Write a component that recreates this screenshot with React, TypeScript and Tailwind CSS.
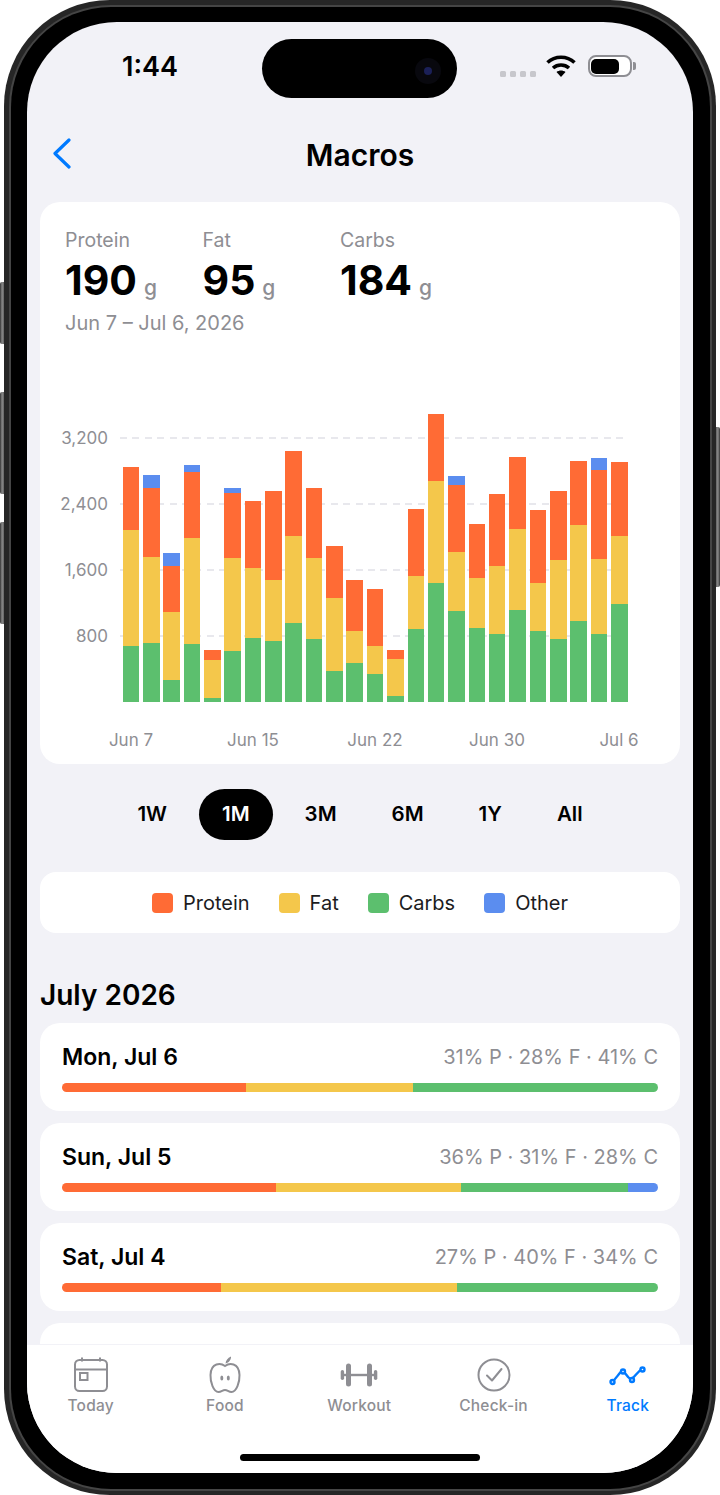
const ORANGE = '#ff6b35'
const YELLOW = '#f4c74b'
const GREEN = '#5cbf6e'
const BLUE = '#5b8def'

// tops of each segment as read from the chart, [green, fat, protein, other], baseline at 905
const bars: number[][] = [
  [736, 390, 201],
  [729, 470, 264, 223],
  [840, 635, 496, 457],
  [730, 413, 214, 193],
  [894, 778, 748],
  [752, 474, 279, 262],
  [714, 504, 302],
  [723, 538, 272],
  [668, 406, 153],
  [717, 472, 262],
  [813, 594, 438],
  [787, 693, 538],
  [820, 736, 566],
  [887, 777, 750],
  [686, 526, 327],
  [547, 241, 41],
  [632, 454, 255, 228],
  [682, 534, 370],
  [700, 496, 281],
  [628, 386, 171],
  [693, 549, 328],
  [717, 478, 271],
  [661, 373, 181],
  [702, 476, 208, 172],
  [612, 407, 184],
]

const segColors = [GREEN, YELLOW, ORANGE, BLUE]

const days = [
  { label: 'Mon, Jul 6', text: '31% P · 28% F · 41% C', parts: [184, 167, 245, 0] },
  { label: 'Sun, Jul 5', text: '36% P · 31% F · 28% C', parts: [214, 185, 167, 30] },
  { label: 'Sat, Jul 4', text: '27% P · 40% F · 34% C', parts: [159, 236, 201, 0] },
]

function Bar({ tops }: { tops: number[] }) {
  return (
    <div className="flex w-[16.6px] flex-col-reverse">
      {tops.map((top, i) => {
        const prev = i === 0 ? 905 : tops[i - 1]
        return <div key={i} style={{ height: (prev - top) / 3, backgroundColor: segColors[i] }} />
      })}
    </div>
  )
}

function Stat({ label, value }: { label: string; value: string }) {
  return (
    <div className="w-[137.5px]">
      <div className="text-[19.5px] leading-[26px] text-[#8e8e93]">{label}</div>
      <div className="mt-[9px] flex items-baseline gap-[7px] leading-[36px]">
        <span className="text-[41px] font-bold text-black">{value}</span>
        <span className="text-[21px] font-medium text-[#8e8e93]">g</span>
      </div>
    </div>
  )
}

function Chart() {
  return (
    <div className="mt-[36px] flex">
      <div className="flex w-[68px] flex-col items-end pt-[55px] text-[17px] leading-[22px] text-[#8e8e93]">
        <div className="h-[66px]">3,200</div>
        <div className="h-[66px]">2,400</div>
        <div className="h-[66px]">1,600</div>
        <div className="h-[66px]">800</div>
      </div>
      <div className="relative ml-[12px] h-[330px] w-[508px]">
        <div className="absolute inset-x-0 top-[65px]">
          {[0, 1, 2, 3].map((i) => (
            <div key={i} className="h-[66px]">
              <div className="h-[2px] bg-[repeating-linear-gradient(90deg,#e8e8ed_0_7px,transparent_7px_12.4px)]" />
            </div>
          ))}
        </div>
        <div className="relative flex h-full items-end gap-[3.76px] pl-[2.7px]">
          {bars.map((tops, i) => (
            <Bar key={i} tops={tops} />
          ))}
        </div>
      </div>
    </div>
  )
}

function TabIcon({ name }: { name: string }) {
  if (name === 'Today') {
    return (
      <svg width="36" height="36" viewBox="0 0 36 36" fill="none" stroke="#8e8e93" strokeWidth="2">
        <rect x="2" y="3" width="32" height="31" rx="4.5" />
        <path d="M2 12.5h32" />
        <path d="M9 0.5v4M27 0.5v4" />
        <rect x="7" y="16" width="7.5" height="7" />
      </svg>
    )
  }
  if (name === 'Food') {
    return (
      <svg width="36" height="38" viewBox="0 0 36 38" fill="none" stroke="#8e8e93" strokeWidth="2">
        <path d="M18 10C14 7 4 6 3.500 19c-.3 7 3 17 8 17 3 0 4-2 6.500-2s3.500 2 6.500 2c5 0 8.300-10 8-17C32 6 22 7 18 10Z" />
        <path d="M18.500 7.500c.4-3 2-5.500 5.500-7 .2 3-1.800 6-5.500 7Z" fill="#8e8e93" stroke="none" />
        <ellipse cx="14.800" cy="22" rx="1.500" ry="2.600" fill="#8e8e93" stroke="none" />
        <ellipse cx="21.300" cy="22" rx="1.500" ry="2.600" fill="#8e8e93" stroke="none" />
      </svg>
    )
  }
  if (name === 'Workout') {
    return (
      <svg width="38" height="36" viewBox="0 0 38 36" fill="#8e8e93">
        <rect x="0.700" y="13" width="3.400" height="10" rx="1.700" />
        <rect x="6" y="6.500" width="5" height="23" rx="2.500" />
        <rect x="27" y="6.500" width="5" height="23" rx="2.500" />
        <rect x="33.900" y="13" width="3.400" height="10" rx="1.700" />
        <rect x="11" y="16.800" width="16" height="2.400" />
        <rect x="4" y="16.800" width="2" height="2.400" />
        <rect x="32" y="16.800" width="2" height="2.400" />
      </svg>
    )
  }
  if (name === 'Check-in') {
    return (
      <svg width="36" height="36" viewBox="0 0 36 36" fill="none" stroke="#8e8e93" strokeWidth="2">
        <circle cx="18" cy="18" r="15.500" />
        <path d="M11 18.500l5 5 9.500-11.500" strokeLinecap="round" strokeLinejoin="round" />
      </svg>
    )
  }
  return (
    <svg width="38" height="36" viewBox="0 0 38 36" fill="none" stroke="#007aff" strokeWidth="2.400">
      <path d="M3 25c4-3 7-9 10-11 3 0 6 8 9 8 3-1 6-7 11-10" strokeLinecap="round" />
      <circle cx="3.500" cy="25" r="2" fill="#fff" />
      <circle cx="14" cy="14.500" r="2" fill="#fff" />
      <circle cx="23" cy="23" r="2" fill="#fff" />
      <circle cx="33.500" cy="12.500" r="2" fill="#fff" />
    </svg>
  )
}

export default function App() {
  return (
    <div className="relative h-[1495px] w-[720px] overflow-hidden bg-white [font-family:Inter,sans-serif]">
      {/* side buttons */}
      <div className="absolute left-0 top-[282px] h-[62px] w-[6px] rounded-l-[2px] bg-[linear-gradient(90deg,#333,#8a8a8a_35%,#3a3a3a)]" />
      <div className="absolute left-0 top-[392px] h-[102px] w-[6px] rounded-l-[2px] bg-[linear-gradient(90deg,#333,#8a8a8a_35%,#3a3a3a)]" />
      <div className="absolute left-0 top-[522px] h-[102px] w-[6px] rounded-l-[2px] bg-[linear-gradient(90deg,#333,#8a8a8a_35%,#3a3a3a)]" />
      <div className="absolute right-0 top-[427px] h-[160px] w-[6px] rounded-r-[2px] bg-[linear-gradient(270deg,#333,#8a8a8a_35%,#3a3a3a)]" />

      <div className="relative mx-[4px] h-[1495px] rounded-[106px] bg-[#262626] p-[4.500px]">
        <div className="h-full rounded-[102px] bg-[#454545] p-[2px]">
          <div className="h-full rounded-[100px] bg-black px-[16.500px] py-[15.500px]">
            <div className="flex h-full flex-col overflow-hidden rounded-[90px] bg-[#f2f2f7]">
              {/* status bar */}
              <div className="flex h-[76px] shrink-0 items-start pt-[17px]">
                <div className="flex h-[57px] w-[235px] items-center pl-[95px] text-[27px] font-semibold text-black">
                  1:44
                </div>
                <div className="relative h-[59px] w-[195px] rounded-full bg-black">
                  <div className="absolute left-[153px] top-[19px] flex h-[26px] w-[26px] items-center justify-center rounded-full bg-[#08080e]">
                    <div className="h-[8px] w-[8px] rounded-full bg-[#1b2058]" />
                  </div>
                </div>
                <div className="flex items-start pl-[43px] pt-[16px]">
                  <div className="mt-[16px] flex gap-[4.500px]">
                    {[0, 1, 2, 3].map((i) => (
                      <div key={i} className="h-[6px] w-[5.500px] rounded-[1.500px] bg-[#c7c7cc]" />
                    ))}
                  </div>
                  <svg className="ml-[10px]" width="30" height="22" viewBox="0 0 30 22" fill="none" stroke="#000" strokeWidth="3.600">
                    <path d="M1.500 7.500C9 0.500 21 0.500 28.500 7.500" />
                    <path d="M7 13C11.500 9 18.500 9 23 13" />
                    <path d="M10.500 17L15 22L19.500 17C17 15 13 15 10.500 17Z" fill="#000" stroke="none" />
                  </svg>
                  <div className="ml-[12px] flex items-center">
                    <div className="h-[22px] w-[44px] rounded-[8px] border-2 border-[#8e8e93] bg-white p-[1.500px]">
                      <div className="h-full w-[28px] rounded-[5px] bg-black" />
                    </div>
                    <div className="ml-[1px] h-[8px] w-[3px] rounded-r-[2px] bg-[#8e8e93]" />
                  </div>
                </div>
              </div>

              {/* nav bar */}
              <div className="relative flex h-[104px] shrink-0 items-start justify-center pt-[39px]">
                <svg className="absolute left-[25px] top-[40px]" width="20" height="31" viewBox="0 0 20 31" fill="none" stroke="#007aff" strokeWidth="3.200" strokeLinecap="round" strokeLinejoin="round">
                  <path d="M17 2L3 15.500L17 29" />
                </svg>
                <div className="text-[30px] font-semibold leading-[36px] text-black">Macros</div>
              </div>

              {/* scrolling content */}
              <div className="min-h-0 flex-1 overflow-hidden px-[13px]">
                <div className="h-[562px] rounded-[20px] bg-white pt-[25px]">
                  <div className="flex pl-[25px]">
                    <Stat label="Protein" value="190" />
                    <Stat label="Fat" value="95" />
                    <Stat label="Carbs" value="184" />
                  </div>
                  <div className="mt-[4px] pl-[25px] text-[20px] leading-[26px] text-[#8e8e93]">Jun 7 – Jul 6, 2026</div>
                  <Chart />
                  <div className="mt-[26px] grid grid-cols-5 pl-[30px] text-[17px] leading-[24px] text-[#8e8e93]">
                    <div className="text-center">Jun 7</div>
                    <div className="text-center">Jun 15</div>
                    <div className="text-center">Jun 22</div>
                    <div className="text-center">Jun 30</div>
                    <div className="text-center">Jul 6</div>
                  </div>
                </div>

                <div className="mt-[25px] flex justify-center gap-[9px] text-[20.5px] font-semibold text-black">
                  <div className="flex h-[51px] items-center px-[23px]">1W</div>
                  <div className="flex h-[51px] items-center rounded-full bg-black px-[23px] text-white">1M</div>
                  <div className="flex h-[51px] items-center px-[23px]">3M</div>
                  <div className="flex h-[51px] items-center px-[23px]">6M</div>
                  <div className="flex h-[51px] items-center px-[23px]">1Y</div>
                  <div className="flex h-[51px] items-center px-[23px]">All</div>
                </div>

                <div className="mt-[32px] flex h-[61px] items-center justify-center gap-[29px] rounded-[16px] bg-white text-[20px] text-[#1c1c1e]">
                  {[
                    ['Protein', ORANGE],
                    ['Fat', YELLOW],
                    ['Carbs', GREEN],
                    ['Other', BLUE],
                  ].map(([name, color]) => (
                    <div key={name} className="flex items-center gap-[10px]">
                      <div className="h-[20px] w-[21px] rounded-[4px]" style={{ backgroundColor: color }} />
                      <span>{name}</span>
                    </div>
                  ))}
                </div>

                <div className="mt-[42px] text-[28px] font-semibold leading-[40px] text-black">July 2026</div>

                <div className="mt-[8px] flex flex-col gap-[12px]">
                  {days.map((d) => (
                    <div key={d.label} className="h-[88px] rounded-[20px] bg-white px-[22px] pt-[18px]">
                      <div className="flex items-center justify-between leading-[32px]">
                        <span className="text-[23px] font-semibold text-black">{d.label}</span>
                        <span className="text-[20px] text-[#8e8e93]">{d.text}</span>
                      </div>
                      <div className="mt-[10px] flex h-[9px] overflow-hidden rounded-full">
                        {d.parts.map((w, i) => (
                          <div key={i} style={{ width: w, backgroundColor: [ORANGE, YELLOW, GREEN, BLUE][i] }} />
                        ))}
                      </div>
                    </div>
                  ))}
                  <div className="h-[88px] rounded-[20px] bg-white" />
                </div>
              </div>

              {/* tab bar */}
              <div className="relative h-[129px] shrink-0 border-t border-[#f2f2f7] bg-white">
                <div className="flex justify-center pr-[1.500px] pt-[11px]">
                  {['Today', 'Food', 'Workout', 'Check-in', 'Track'].map((name) => (
                    <div key={name} className="flex w-[134.3px] shrink-0 flex-col items-center">
                      <div className="flex h-[38px] items-center justify-center">
                        <TabIcon name={name} />
                      </div>
                      <div className={name === 'Track' ? 'mt-[2px] text-[15.5px] font-medium leading-[20px] tracking-[0.2px] text-[#007aff]' : 'mt-[2px] text-[15.5px] font-medium leading-[20px] tracking-[0.2px] text-[#8e8e93]'}>
                        {name}
                      </div>
                    </div>
                  ))}
                </div>
                <div className="absolute bottom-[12px] left-[213px] h-[7.500px] w-[240px] rounded-full bg-black" />
              </div>
            </div>
          </div>
        </div>
      </div>
    </div>
  )
}
